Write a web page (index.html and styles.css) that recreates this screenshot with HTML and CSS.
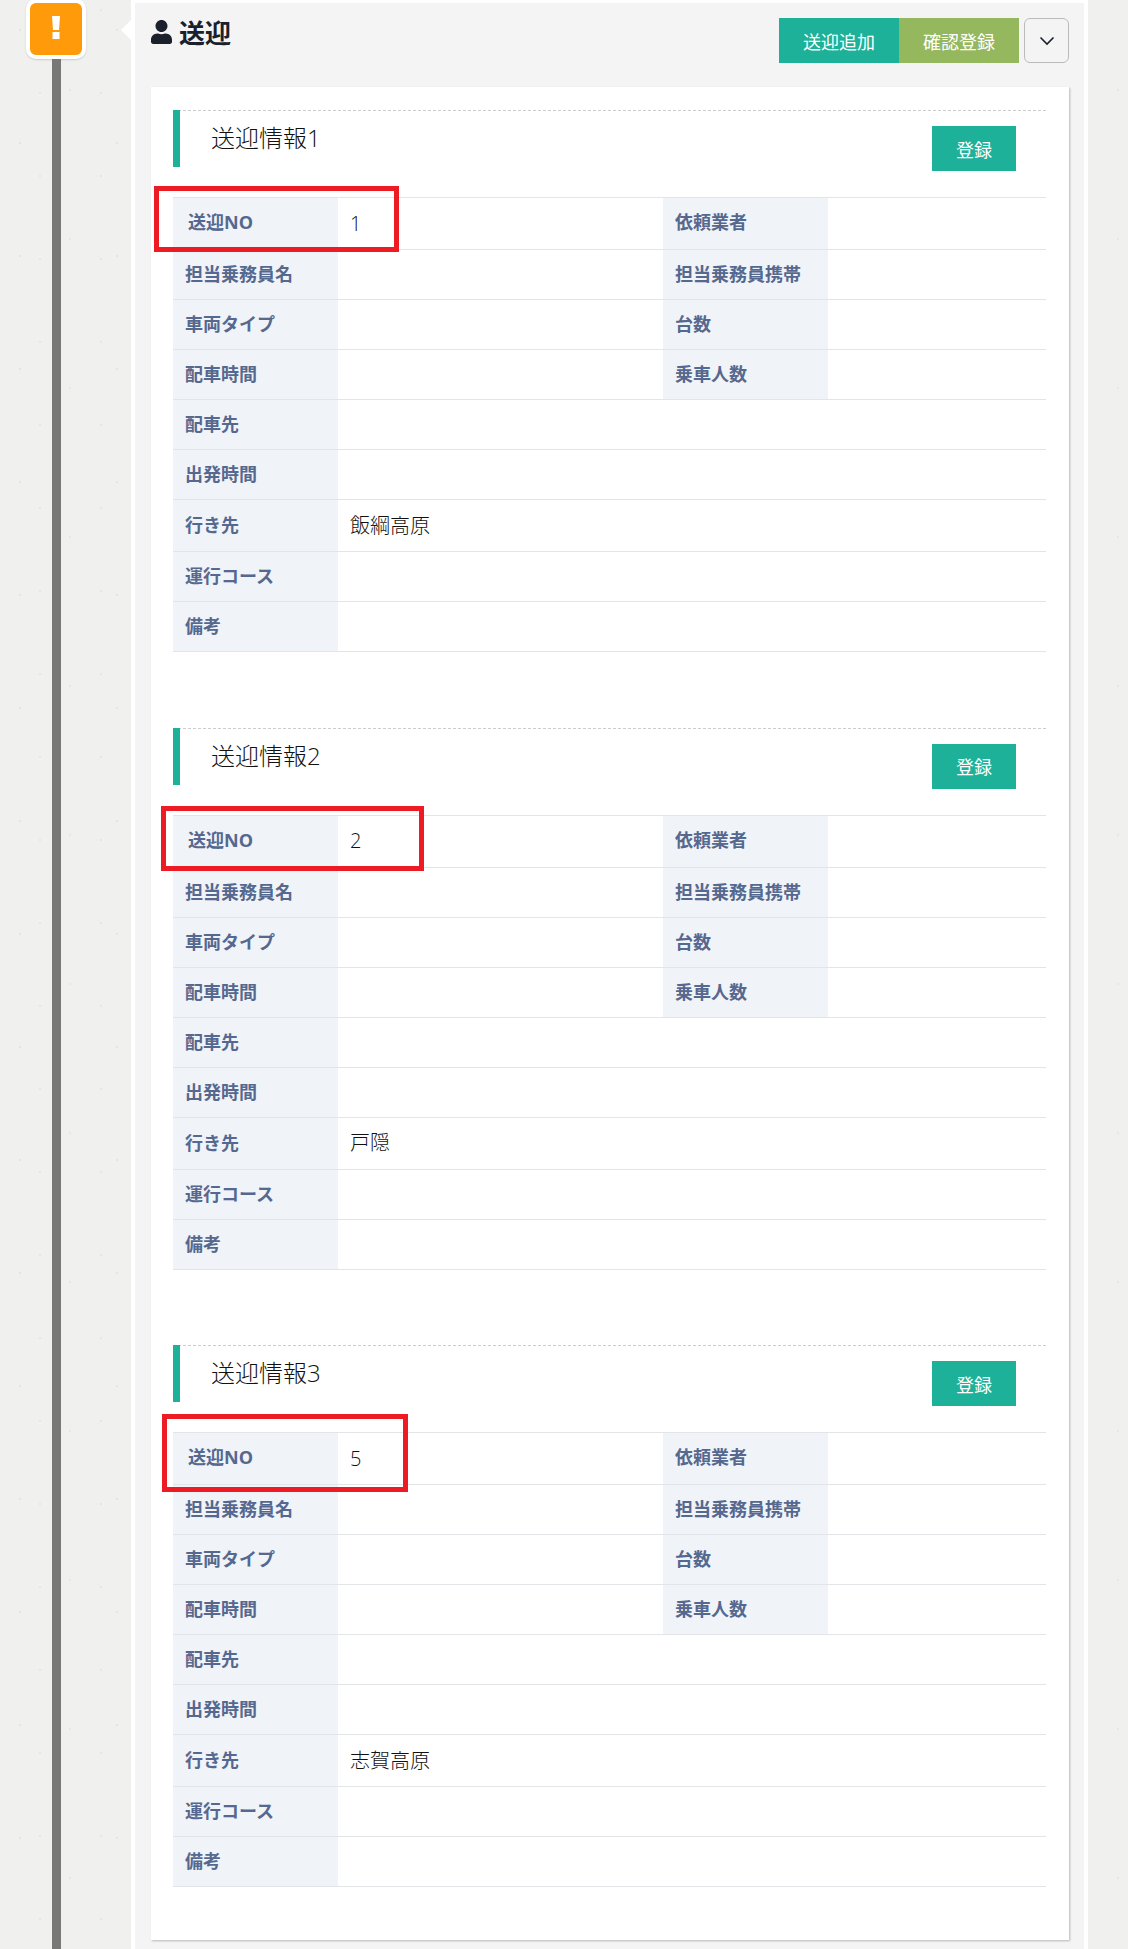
FILE: index.html
```html
<!DOCTYPE html>
<html lang="ja">
  <head>
    <meta charset="UTF-8" />
    <title>送迎</title>
    <link rel="stylesheet" href="styles.css">
  </head>
  <body>
    <div class="page">
      <div class="timeline">
        <div class="badge">
          <svg width="8" height="23" viewBox="0 0 8 23">
            <path d="M0 0H8L7 14H1Z M0.5 16H7.5V23H0.5Z" fill="#fff" />
          </svg>
        </div>
        <div class="line"></div>
      </div>

      <div class="panel">
        <div class="panelHead">
          <h2 class="panelTitle">
            <svg width="21" height="24" viewBox="0 0 448 512">
              <path fill="#1a202c" d="M224 256c70.7 0 128-57.3 128-128S294.7 0 224 0 96 57.3 96 128s57.3 128 128 128zm89.6 32h-16.7c-22.2 10.2-46.9 16-72.9 16s-50.6-5.8-72.9-16h-16.7C60.2 288 0 348.2 0 422.4V464c0 26.5 21.5 48 48 48h352c26.5 0 48-21.5 48-48v-41.6c0-74.2-60.2-134.4-134.4-134.4z" />
            </svg>
            送迎
          </h2>
          <div class="panelBtns">
            <button class="btn btnTeal">送迎追加</button>
            <button class="btn btnGreen">確認登録</button>
            <button class="btnToggle">
              <svg width="16" height="10" viewBox="0 0 16 10">
                <path d="M1.5 1.5L8 8L14.5 1.5" fill="none" stroke="#1a202c" stroke-width="1.6" />
              </svg>
            </button>
          </div>
        </div>

        <div class="card">
          <section class="info">
            <div class="infoHead">
              <h3 class="infoTitle">送迎情報1</h3>
              <button class="btn btnTeal btnSave">登録</button>
            </div>
            <table class="infoTable">
              <colgroup><col class="colLabel" /><col class="colValue" /><col class="colLabel" /><col /></colgroup>
              <tr class="topRow"><th class="first">送迎NO</th><td class="val">1</td><th>依頼業者</th><td></td></tr>
              <tr><th>担当乗務員名</th><td></td><th>担当乗務員携帯</th><td></td></tr>
              <tr><th>車両タイプ</th><td></td><th>台数</th><td></td></tr>
              <tr><th>配車時間</th><td></td><th>乗車人数</th><td></td></tr>
              <tr><th>配車先</th><td colspan="3"></td></tr>
              <tr><th>出発時間</th><td colspan="3"></td></tr>
              <tr><th>行き先</th><td class="val" colspan="3">飯綱高原</td></tr>
              <tr><th>運行コース</th><td colspan="3"></td></tr>
              <tr><th>備考</th><td colspan="3"></td></tr>
            </table>
            <div class="mark mark1"></div>
          </section>

          <section class="info">
            <div class="infoHead">
              <h3 class="infoTitle">送迎情報2</h3>
              <button class="btn btnTeal btnSave">登録</button>
            </div>
            <table class="infoTable">
              <colgroup><col class="colLabel" /><col class="colValue" /><col class="colLabel" /><col /></colgroup>
              <tr class="topRow"><th class="first">送迎NO</th><td class="val">2</td><th>依頼業者</th><td></td></tr>
              <tr><th>担当乗務員名</th><td></td><th>担当乗務員携帯</th><td></td></tr>
              <tr><th>車両タイプ</th><td></td><th>台数</th><td></td></tr>
              <tr><th>配車時間</th><td></td><th>乗車人数</th><td></td></tr>
              <tr><th>配車先</th><td colspan="3"></td></tr>
              <tr><th>出発時間</th><td colspan="3"></td></tr>
              <tr><th>行き先</th><td class="val" colspan="3">戸隠</td></tr>
              <tr><th>運行コース</th><td colspan="3"></td></tr>
              <tr><th>備考</th><td colspan="3"></td></tr>
            </table>
            <div class="mark mark2"></div>
          </section>

          <section class="info">
            <div class="infoHead">
              <h3 class="infoTitle">送迎情報3</h3>
              <button class="btn btnTeal btnSave">登録</button>
            </div>
            <table class="infoTable">
              <colgroup><col class="colLabel" /><col class="colValue" /><col class="colLabel" /><col /></colgroup>
              <tr class="topRow"><th class="first">送迎NO</th><td class="val">5</td><th>依頼業者</th><td></td></tr>
              <tr><th>担当乗務員名</th><td></td><th>担当乗務員携帯</th><td></td></tr>
              <tr><th>車両タイプ</th><td></td><th>台数</th><td></td></tr>
              <tr><th>配車時間</th><td></td><th>乗車人数</th><td></td></tr>
              <tr><th>配車先</th><td colspan="3"></td></tr>
              <tr><th>出発時間</th><td colspan="3"></td></tr>
              <tr><th>行き先</th><td class="val" colspan="3">志賀高原</td></tr>
              <tr><th>運行コース</th><td colspan="3"></td></tr>
              <tr><th>備考</th><td colspan="3"></td></tr>
            </table>
            <div class="mark mark3"></div>
          </section>
        </div>
      </div>
    </div>
  </body>
</html>
```

FILE: styles.css
```css
* {
  box-sizing: border-box;
}
html,
body {
  margin: 0;
  height: 1949px;
  overflow: hidden;
}
body {
  font-family: "Open Sans", "Noto Sans CJK JP", sans-serif;
  color: #222;
  background-color: #f0f0ee;
  background-image:
    radial-gradient(circle at 20px 30px, #e4e4e1 1px, transparent 1.5px),
    radial-gradient(circle at 70px 90px, #e7e7e4 1px, transparent 1.5px),
    radial-gradient(circle at 40px 10px, #e6e6e3 1px, transparent 1.5px);
  background-size: 97px 113px, 131px 149px, 61px 83px;
}

.page {
  display: flex;
  height: 1949px;
}

/* timeline on the left */
.timeline {
  width: 131px;
  display: flex;
  flex-direction: column;
  flex: none;
}
.badge {
  width: 60px;
  height: 60px;
  margin: -1px 0 0 26px;
  border: 4px solid #fff;
  border-radius: 10px;
  background: #ff9a0a;
  box-shadow: 0 1px 2px rgba(0, 0, 0, 0.15);
  display: flex;
  align-items: center;
  justify-content: center;
}
.badge svg {
  margin-top: -3px;
}
.line {
  flex: 1;
  width: 9px;
  margin-left: 52px;
  background: #787878;
}

/* main panel */
.panel {
  position: relative;
  width: 957px;
  flex: none;
  border: 4px solid #fff;
  border-top-width: 3px;
  border-bottom: none;
  background: #f4f4f4;
  padding: 15px 15px 0 16px;
}
.panel::before {
  content: "";
  position: absolute;
  left: -14px;
  top: 17px;
  border: 10px solid transparent;
  border-left: none;
  border-right-color: #fff;
}
.panelHead {
  display: flex;
  justify-content: space-between;
  height: 45px;
  margin-bottom: 24px;
}
.panelTitle {
  margin: 0;
  display: flex;
  align-items: center;
  gap: 7px;
  height: 28px;
  font-size: 26px;
  font-weight: 700;
  color: #1a202c;
}
.panelBtns {
  display: flex;
}
.btn {
  width: 120px;
  height: 45px;
  border: none;
  padding: 0;
  color: #fff;
  font-family: inherit;
  font-size: 18px;
}
.btnTeal {
  background: #1cb198;
}
.btnGreen {
  background: #95b75d;
}
.btnToggle {
  width: 45px;
  height: 45px;
  margin-left: 5px;
  padding: 0;
  border: 1px solid #bbb;
  border-radius: 6px;
  background: #f4f4f4;
  display: flex;
  align-items: center;
  justify-content: center;
}

.card {
  background: #fff;
  padding: 23px 23px 53px 22px;
  box-shadow: 1px 1px 2px rgba(0, 0, 0, 0.25);
}

/* one block of info */
.info {
  position: relative;
  margin-bottom: 75.5px;
}
.info:last-child {
  margin-bottom: 0;
}
.infoHead {
  display: flex;
  justify-content: space-between;
  align-items: flex-start;
  height: 87px;
  border-top: 1px dashed #ccc;
}
.infoTitle {
  margin: 0;
  height: 57px;
  padding: 10px 0 0 31px;
  margin-top: -1px;
  border-left: 7px solid #1cb198;
  font-size: 24px;
  font-weight: 300;
  line-height: 36px;
  color: #111;
}
.btnSave {
  width: 84px;
  margin: 15px 30px 0 0;
}

.infoTable {
  width: 100%;
  table-layout: fixed;
  border-collapse: separate;
  border-spacing: 0;
  border-top: 1px solid #e2e4e7;
}
.colLabel {
  width: 165px;
}
.colValue {
  width: 325px;
}
.infoTable th,
.infoTable td {
  border-bottom: 1px solid #e2e4e7;
  padding: 11px 12px;
  line-height: 27px;
  height: 50px;
  text-align: left;
}
.infoTable th {
  background: #f0f3f8;
  color: #55688f;
  font-size: 18px;
  font-weight: 700;
}
.infoTable .topRow th {
  padding-top: 10px;
  padding-bottom: 12px;
}
.infoTable th.first {
  padding-left: 15px;
}
.infoTable td.val {
  padding: 10.5px 12px;
  line-height: 30px;
  font-size: 20px;
  font-weight: 300;
  color: #111;
  height: 52px;
}

/* red boxes drawn on top of the screenshot */
.mark {
  position: absolute;
  border: 5px solid #ed1c24;
}
.mark1 {
  left: -19px;
  top: 76px;
  width: 245px;
  height: 66px;
}
.mark2 {
  left: -12px;
  top: 78.5px;
  width: 263px;
  height: 65px;
}
.mark3 {
  left: -11px;
  top: 69px;
  width: 246px;
  height: 78px;
}
```
